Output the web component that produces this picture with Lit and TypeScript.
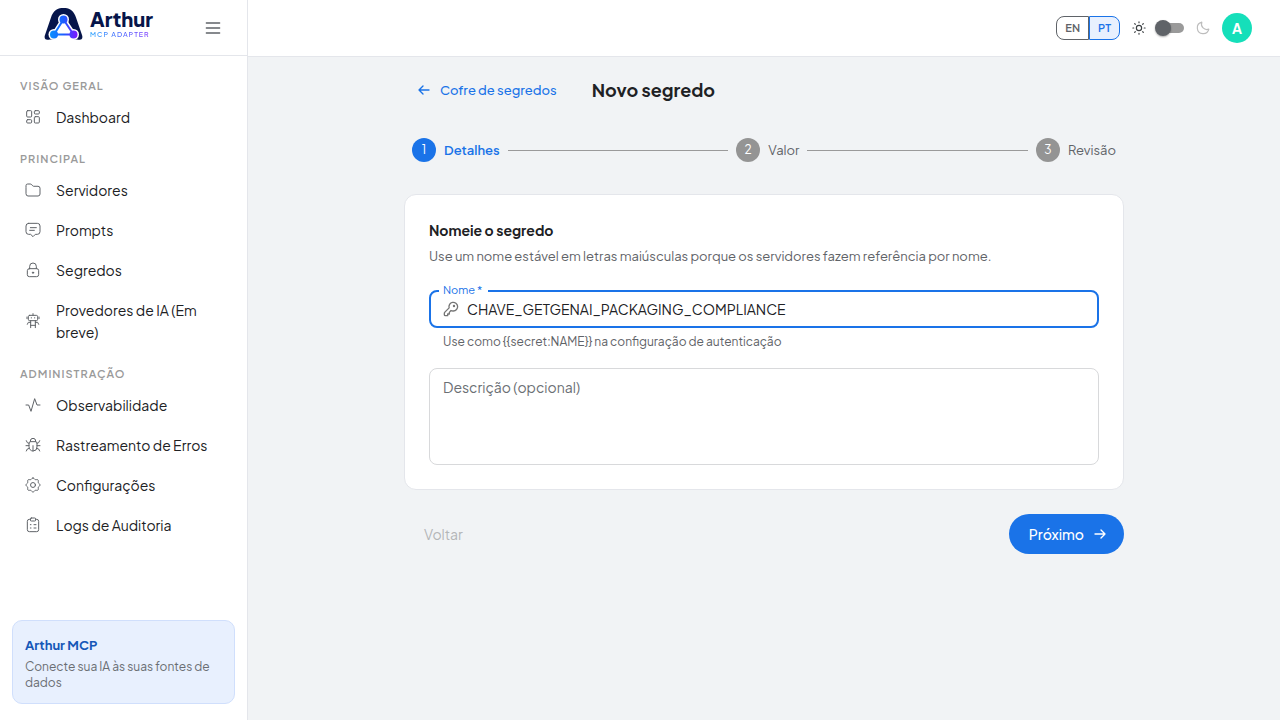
import { LitElement, html, css, svg } from "lit";
import { customElement, property, state } from "lit/decorators.js";
import { classMap } from "lit/directives/class-map.js";

const icons: Record<string, unknown> = {
  dashboard: svg`<rect x="2.5" y="2.5" width="7.500" height="9.500" rx="1.500"/><rect x="14" y="2.5" width="7.5" height="5" rx="1.500"/><rect x="2.5" y="16" width="7.500" height="5" rx="1.500"/><rect x="14" y="11.5" width="7.5" height="9.500" rx="1.500"/>`,
  folder: svg`<path d="M1.500 8V5.500A2.500 2.500 0 0 1 4 3h3.800a3 3 0 0 1 2.300 1l1.400 1.700a2 2 0 0 0 1.500.7H19.500a3 3 0 0 1 3 3v8.600a3 3 0 0 1-3 3H4.500a3 3 0 0 1-3-3Z"/>`,
  prompt: svg`<path d="M5.500 2h13a4 4 0 0 1 4 4v8.500a4 4 0 0 1-4 4h-3L12 22l-3.500-3.500h-3a4 4 0 0 1-4-4V6a4 4 0 0 1 4-4Z"/><path d="M8 8.500h9M7 12.500h7"/>`,
  lock: svg`<rect x="3.500" y="10" width="17" height="12" rx="3"/><path d="M7 10V6.500a5 5 0 0 1 10 0V10"/><circle cx="12" cy="16" r="1" fill="currentColor"/>`,
  robot: svg`<path d="M12 1v2.500"/><rect x="5" y="3.500" width="14" height="8" rx="2"/><path d="M9.500 7v.5M14.500 7v.5M3 6v2.500M21 6v2.500M8.500 11.500V22M15.500 11.500V22M8.500 14H5l-1.500 3M15.500 14H19l1.500 3M8.500 18.500h7"/>`,
  pulse: svg`<path d="M1.500 12h4l3.500 9.500L14.500 2.500 18 12h4.500"/>`,
  bug: svg`<path d="M6 9.500A2.500 2.500 0 0 1 8.500 7h7A2.500 2.500 0 0 1 18 9.500V15a6 6 0 0 1-12 0Z"/><path d="M8 7V6a4 4 0 0 1 8 0v1M12 13v8M6 13H1.500M22.500 13H18M6 9.500 3.500 8.500 2 5.500M18 9.500l2.500-1L22 5.500M6.500 17l-3 1L2 21M17.500 17l3 1L22 21"/>`,
  gear: svg`<path d="M12 1.500c1.700 0 2 1.900 3.400 2.400 1.400.6 3-.7 4.100.5 1.200 1.200-.1 2.700.5 4.100.5 1.400 2.500 1.800 2.500 3.500s-2 2-2.500 3.400c-.6 1.400.7 3-.5 4.100-1.100 1.200-2.700-.1-4.100.5-1.400.5-1.700 2.500-3.400 2.500s-2-2-3.400-2.500c-1.400-.6-3 .7-4.100-.5-1.200-1.100.1-2.700-.5-4.100C3.500 14 1.500 13.700 1.500 12S3.500 10 4 8.500c.6-1.400-.7-2.900.5-4.100 1.100-1.200 2.700.1 4.100-.5C10 3.400 10.300 1.500 12 1.500Z"/><circle cx="12" cy="12" r="3.700"/>`,
  clipboard: svg`<path d="M8 3.500H6.500a3 3 0 0 0-3 3V19a3 3 0 0 0 3 3h11a3 3 0 0 0 3-3V6.500a3 3 0 0 0-3-3H16"/><rect x="8" y="1.500" width="8" height="4.500" rx="1.500"/><path d="M13.500 11.500H16.500M13.500 16.500H16.500M8 11.500H9M8 16.500H9"/>`,
  menu: svg`<path d="M2 4.500h20M2 12h20M2 19.500h20"/>`,
  sun: svg`<circle cx="12" cy="12" r="4.500"/><path d="M12 1.500v1.500M12 21v1.500M1.500 12H3M21 12h1.500M4.600 4.600l1 1M18.400 18.400l1 1M4.600 19.400l1-1M18.400 5.600l1-1"/>`,
  moon: svg`<path d="M22 14a10 10 0 1 1-12-12 9.300 9.300 0 0 0 12 12Z"/>`,
  back: svg`<path d="M4.500 12h15M10.500 6l-6 6 6 6"/>`,
  next: svg`<path d="M4.500 12h15M13.500 6l6 6-6 6"/>`,
  key: svg`<path d="M15.500 15a6.500 6.500 0 1 0-6.300-4.700L2.800 16.700A3 3 0 0 0 2 18.800V20.500A1.500 1.500 0 0 0 3.500 22H7v-2.500h2.500V17l2.500-2.700a6 6 0 0 0 3.500.7Z"/><circle cx="16.500" cy="7.500" r=".8"/>`,
};

@customElement("ui-icon")
class UiIcon extends LitElement {
  @property() name = "";
  static styles = css`
    :host { display: inline-flex; flex: none; width: 16px; height: 16px; }
    .glyph {
      width: 100%; height: 100%; fill: none; stroke: currentColor;
      stroke-width: var(--icon-stroke, 1.5); stroke-linecap: round; stroke-linejoin: round;
    }
  `;
  render() {
    return html`<svg class="glyph" viewBox="0 0 24 24" aria-hidden="true">${icons[this.name]}</svg>`;
  }
}

const sections = [
  { title: "VISÃO GERAL", items: [["dashboard", "Dashboard"]] },
  {
    title: "PRINCIPAL",
    items: [
      ["folder", "Servidores"],
      ["prompt", "Prompts"],
      ["lock", "Segredos"],
      ["robot", "Provedores de IA (Em breve)"],
    ],
  },
  {
    title: "ADMINISTRAÇÃO",
    items: [
      ["pulse", "Observabilidade"],
      ["bug", "Rastreamento de Erros"],
      ["gear", "Configurações"],
      ["clipboard", "Logs de Auditoria"],
    ],
  },
];

@customElement("app-sidebar")
class AppSidebar extends LitElement {
  static styles = css`
    :host {
      display: flex; flex-direction: column; flex: none; box-sizing: border-box;
      width: 248px; background: #fff; border-right: 1px solid #e4e6eb;
    }
    .head {
      display: flex; align-items: center; box-sizing: border-box; height: 56px;
      padding-right: 18px; border-bottom: 1px solid #e4e6eb;
    }
    .logo { flex: 1; display: flex; justify-content: center; align-items: center; gap: 7px; padding-bottom: 7px; text-decoration: none; }
    .mark { width: 39px; height: 32px; }
    .brand { font-size: 20px; line-height: 22px; font-weight: 800; color: #06154a; }
    .words { display: flex; flex-direction: column; }
    .sub {
      font-size: 7px; line-height: 10px; font-weight: 500; letter-spacing: 1px; color: transparent;
      background: linear-gradient(90deg, #159bff, #8030ff); background-clip: text; -webkit-background-clip: text;
    }
    .menu {
      display: grid; place-items: center; width: 32px; height: 32px; padding: 0;
      border: 0; background: none; color: #5f6368; --icon-stroke: 2;
    }
    .nav { flex: 1; padding: 8px 12px; }
    .group { margin: 0; padding: 13px 8px 2px; font-size: 11px; line-height: 18px; font-weight: 600; letter-spacing: 1px; color: #9a9a9a; }
    .list { margin: 0; padding: 0; list-style: none; }
    .item {
      display: flex; align-items: center; gap: 15px; padding: 9px 12px 9px 13px;
      font-size: 14px; line-height: 22px; color: #202124; text-decoration: none;
    }
    .item ui-icon { color: #5f6368; }
    .promo { margin: 0 12px 16px; padding: 12px; border: 1px solid #d0dffc; border-radius: 10px; background: #e8f0fe; }
    .promo-title { margin: 0 0 2px; font-size: 13px; line-height: 24px; font-weight: 700; color: #1557b8; }
    .promo-text { margin: 0; font-size: 12px; line-height: 16px; color: #6a6e73; }
  `;
  render() {
    return html`
      <div class="head">
        <a class="logo" href="#">
          <svg class="mark" viewBox="0 0 39 32" aria-hidden="true">
            <defs>
              <linearGradient id="g" gradientUnits="userSpaceOnUse" x1="6" y1="0" x2="34" y2="0">
                <stop offset="0" stop-color="#0a90ff" /><stop offset="0.500" stop-color="#1d5cff" /><stop offset="1" stop-color="#8214ff" />
              </linearGradient>
            </defs>
            <path fill="#06154a" d="M1.500 31.200C.3 30.300.5 28.500 1 27L7 9.500C9 3.500 13 0 17.500 0h4C26 0 30 3.500 32 9.500L38 27c.5 1.500.7 3.300-.5 4.200-1.300.9-3 .2-4.500.2H6c-1.500 0-3.200.7-4.500-.2Z" />
            <path fill="#fff" stroke="#fff" stroke-width="5" stroke-linejoin="round" d="M19.500 11.500 10 26.500h19.500Z" />
            <path fill="#fff" d="M10 26h19.500v6H10Z" />
            <g fill="#fff"><circle cx="19.500" cy="11.500" r="5.500" /><circle cx="10" cy="26.500" r="5.500" /><circle cx="29.500" cy="26.500" r="5.500" /></g>
            <path fill="none" stroke="url(#g)" stroke-width="2" d="M19.500 11.500 10 26.500h19.500Z" />
            <g fill="url(#g)"><circle cx="19.500" cy="11.500" r="4" /><circle cx="10" cy="26.500" r="4" /><circle cx="29.500" cy="26.500" r="4" /></g>
          </svg>
          <span class="words"><span class="brand">Arthur</span><span class="sub">MCP ADAPTER</span></span>
        </a>
        <button class="menu" aria-label="Menu"><ui-icon name="menu"></ui-icon></button>
      </div>
      <nav class="nav">
        ${sections.map(
          (s) => html`
            <h2 class="group">${s.title}</h2>
            <ul class="list">
              ${s.items.map(([icon, label]) => html`<li><a class="item" href="#"><ui-icon name=${icon}></ui-icon><span>${label}</span></a></li>`)}
            </ul>
          `
        )}
      </nav>
      <aside class="promo">
        <p class="promo-title">Arthur MCP</p>
        <p class="promo-text">Conecte sua IA às suas fontes de dados</p>
      </aside>
    `;
  }
}

@customElement("app-topbar")
class AppTopbar extends LitElement {
  @state() lang = "PT";
  static styles = css`
    :host {
      display: flex; align-items: center; justify-content: flex-end; height: 56px;
      padding-right: 28px; background: #fff; border-bottom: 1px solid #e4e6eb;
    }
    button { font-family: inherit; }
    .langs { display: flex; margin-right: 12px; }
    .lang {
      height: 24px; padding: 0 8px; font-size: 11px; font-weight: 600; line-height: 22px;
      border: 1px solid #5f6368; border-radius: 8px 0 0 8px; background: #fff; color: #5f6368;
    }
    .lang + .lang { border-radius: 0 8px 8px 0; }
    .lang.on { border-color: #1a73e8; background: #e8f0fe; color: #1a73e8; }
    .sun, .moon { width: 14px; height: 14px; }
    .sun { color: #3c4043; --icon-stroke: 2; }
    .moon { color: #bdbdbd; --icon-stroke: 2; }
    .switch {
      appearance: none; display: flex; align-items: center; margin: 0 12px 0 10px; width: 28px; height: 10px;
      border-radius: 5px; background: #9a9a9a;
    }
    .switch::before { content: ""; flex: none; width: 16px; height: 16px; margin-left: -1px; border-radius: 50%; background: #5f6368; box-shadow: 0 1px 2px #0005; }
    .switch:checked::before { margin-left: 13px; }
    .avatar {
      width: 30px; height: 30px; margin-left: 12px; padding: 0; border: 0; border-radius: 50%;
      background: #15dfba; color: #fff; font-size: 14px; font-weight: 700;
    }
  `;
  render() {
    return html`
      <div class="langs">
        ${["EN", "PT"].map(
          (l) => html`<button class=${classMap({ lang: true, on: l === this.lang })} @click=${() => (this.lang = l)}>${l}</button>`
        )}
      </div>
      <ui-icon class="sun" name="sun"></ui-icon>
      <input class="switch" type="checkbox" role="switch" aria-label="Tema escuro" />
      <ui-icon class="moon" name="moon"></ui-icon>
      <button class="avatar">A</button>
    `;
  }
}

@customElement("secret-wizard")
class SecretWizard extends LitElement {
  static styles = css`
    :host { display: block; max-width: 720px; margin: 0 auto; padding: 16px 0; }
    button, input, textarea { font-family: inherit; }
    .top { display: flex; align-items: center; gap: 35px; padding-left: 12px; }
    .back { display: flex; align-items: center; gap: 8px; font-size: 13px; line-height: 32px; font-weight: 500; color: #1a73e8; text-decoration: none; --icon-stroke: 2; }
    .title { margin: 0; font-size: 18px; line-height: 34px; font-weight: 700; color: #202124; }
    .steps { display: flex; align-items: center; gap: 8px; margin: 31px 0 32px; padding: 0 8px; }
    .step { display: flex; align-items: center; gap: 8px; font-size: 13px; line-height: 24px; color: #5f6368; }
    .num { width: 24px; height: 24px; border-radius: 50%; background: #949494; color: #fff; font-size: 12px; text-align: center; }
    .step.on { color: #1a73e8; font-weight: 600; }
    .step.on .num { background: #1a73e8; font-weight: 400; }
    .rule { flex: 1; height: 1px; background: #9a9a9a; }
    .card { padding: 23px 24px 24px; border: 1px solid #e4e6eb; border-radius: 12px; background: #fff; }
    .heading { margin: 0; font-size: 14px; line-height: 24px; font-weight: 700; color: #202124; }
    .desc { margin: 2px 0 22px; font-size: 13px; line-height: 24px; color: #5f6368; }
    .field { position: relative; display: flex; align-items: center; gap: 8px; height: 34px; padding: 0 12px; border: 2px solid #1a73e8; border-radius: 8px; color: #5f6368; }
    .field ui-icon { --icon-stroke: 2; color: #757575; }
    .label { position: absolute; left: 8px; top: -9px; padding: 0 6px 0 4px; background: #fff; color: #1a73e8; font-size: 11px; line-height: 14px; }
    .input { flex: 1; min-width: 0; padding: 0; border: 0; outline: 0; background: none; font-size: 14px; line-height: 24px; color: #202124; }
    .help { margin: 4px 14px 16px; font-size: 12px; line-height: 20px; color: #5f6368; }
    .area {
      display: block; box-sizing: border-box; width: 100%; height: 97px; padding: 7px 13px; resize: none;
      border: 1px solid #d8d9db; border-radius: 8px; outline: 0; font-size: 14px; line-height: 22px; color: #202124;
    }
    .area::placeholder { color: #6b6f74; }
    .actions { display: flex; justify-content: space-between; align-items: center; margin-top: 24px; }
    .prev, .next { height: 40px; padding: 0 20px; border: 0; border-radius: 20px; font-size: 14px; font-weight: 400; background: none; }
    .prev:disabled { color: #b4b6b8; }
    .next { display: flex; align-items: center; gap: 8px; padding-right: 16px; background: #1a73e8; color: #fff; font-weight: 500; --icon-stroke: 2; }
  `;
  render() {
    const steps = ["Detalhes", "Valor", "Revisão"];
    return html`
      <div class="top">
        <a class="back" href="#"><ui-icon name="back"></ui-icon>Cofre de segredos</a>
        <h1 class="title">Novo segredo</h1>
      </div>
      <div class="steps">
        ${steps.map(
          (s, i) => html`
            ${i ? html`<span class="rule"></span>` : ""}
            <div class=${classMap({ step: true, on: i === 0 })}><span class="num">${i + 1}</span><span>${s}</span></div>
          `
        )}
      </div>
      <section class="card">
        <h2 class="heading">Nomeie o segredo</h2>
        <p class="desc">Use um nome estável em letras maiúsculas porque os servidores fazem referência por nome.</p>
        <div class="field">
          <label class="label" for="name">Nome *</label>
          <ui-icon name="key"></ui-icon>
          <input class="input" id="name" required value="CHAVE_GETGENAI_PACKAGING_COMPLIANCE" />
        </div>
        <p class="help">Use como {{secret:NAME}} na configuração de autenticação</p>
        <textarea class="area" aria-label="Descrição (opcional)" placeholder="Descrição (opcional)"></textarea>
      </section>
      <div class="actions">
        <button class="prev" disabled>Voltar</button>
        <button class="next">Próximo <ui-icon name="next"></ui-icon></button>
      </div>
    `;
  }
}

@customElement("app-root")
class AppRoot extends LitElement {
  static styles = css`
    :host {
      display: flex; min-height: 100vh; background: #f1f3f5;
      font-family: "Plus Jakarta Sans", Inter, "Open Sans", sans-serif;
    }
    .page { flex: 1; min-width: 0; }
  `;
  render() {
    return html`
      <app-sidebar></app-sidebar>
      <div class="page">
        <app-topbar></app-topbar>
        <main><secret-wizard></secret-wizard></main>
      </div>
    `;
  }
}
